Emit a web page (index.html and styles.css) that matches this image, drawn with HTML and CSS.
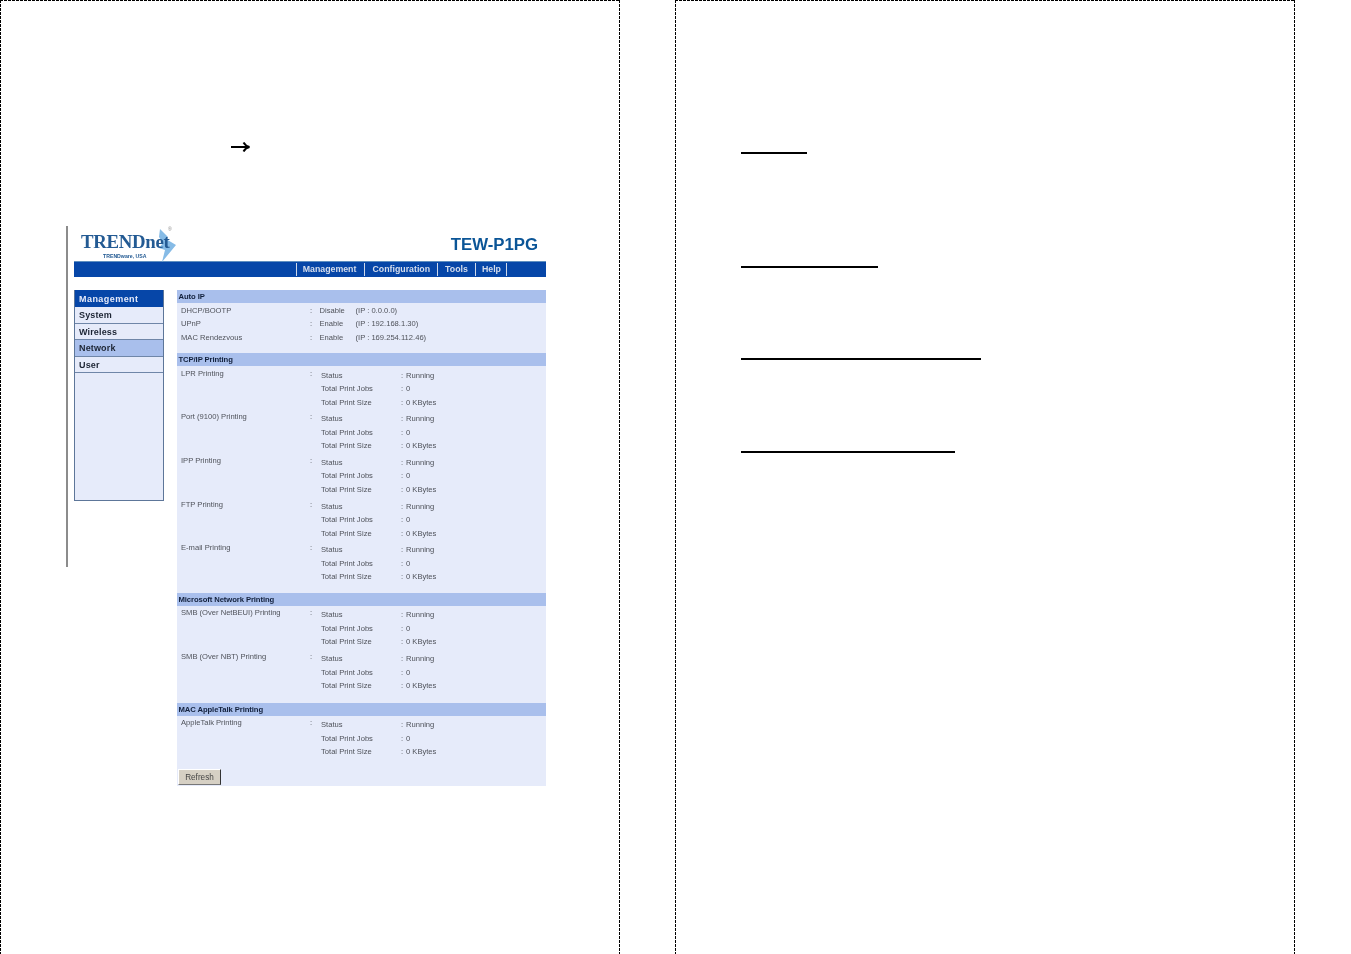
FILE: index.html
```html
<!DOCTYPE html>
<html lang="en">
<head>
<meta charset="utf-8">
<title>TEW-P1PG Network</title>
<link rel="stylesheet" href="styles.css">
</head>
<body>
<div class="spread">
  <section class="page page-left">
    <svg class="arrow" width="20" height="12" viewBox="0 0 20 12" aria-hidden="true"><path d="M0 6H18M12.500 1.500C14 4 16 5.500 18.500 6C16 6.500 14 8 12.500 10.500" fill="none" stroke="#000" stroke-width="2"/></svg>
    <div class="figure">
      <header class="brand">
        <div class="logo">
          <svg class="logo-bolt" width="20" height="33" viewBox="0 0 20 33" aria-hidden="true"><path d="M3 0L11 8L9 10L19 16L5 33L8 21L2 19L6 14L2 8Z" fill="#86bbe6"/></svg>
          <span class="logo-mark">®</span>
          <span class="logo-name">TRENDnet</span>
          <span class="logo-sub">TRENDware, USA</span>
        </div>
        <div class="model">TEW-P1PG</div>
      </header>
      <nav class="topnav">
        <span class="nav-item nav-first">Management</span>
        <span class="nav-item">Configuration</span>
        <span class="nav-item">Tools</span>
        <span class="nav-item nav-last">Help</span>
      </nav>
      <div class="columns">
        <aside class="sidebar">
          <div class="side-title">Management</div>
          <div class="side-item">System</div>
          <div class="side-item">Wireless</div>
          <div class="side-item active">Network</div>
          <div class="side-item">User</div>
        </aside>
        <main class="content">
          <h2 class="bar">Auto IP</h2>
          <div class="section auto">
            <div class="auto-row"><span>DHCP/BOOTP</span><span>:</span><span>Disable</span><span>(IP : 0.0.0.0)</span></div>
            <div class="auto-row"><span>UPnP</span><span>:</span><span>Enable</span><span>(IP : 192.168.1.30)</span></div>
            <div class="auto-row"><span>MAC Rendezvous</span><span>:</span><span>Enable</span><span>(IP : 169.254.112.46)</span></div>
          </div>

          <h2 class="bar">TCP/IP Printing</h2>
          <div class="section tcp">
            <div class="group"><span class="g-name">LPR Printing</span><span class="g-colon">:</span><div class="stats"><span>Status</span><span>:</span><span>Running</span><span>Total Print Jobs</span><span>:</span><span>0</span><span>Total Print Size</span><span>:</span><span>0 KBytes</span></div></div>
            <div class="group"><span class="g-name">Port (9100) Printing</span><span class="g-colon">:</span><div class="stats"><span>Status</span><span>:</span><span>Running</span><span>Total Print Jobs</span><span>:</span><span>0</span><span>Total Print Size</span><span>:</span><span>0 KBytes</span></div></div>
            <div class="group"><span class="g-name">IPP Printing</span><span class="g-colon">:</span><div class="stats"><span>Status</span><span>:</span><span>Running</span><span>Total Print Jobs</span><span>:</span><span>0</span><span>Total Print Size</span><span>:</span><span>0 KBytes</span></div></div>
            <div class="group"><span class="g-name">FTP Printing</span><span class="g-colon">:</span><div class="stats"><span>Status</span><span>:</span><span>Running</span><span>Total Print Jobs</span><span>:</span><span>0</span><span>Total Print Size</span><span>:</span><span>0 KBytes</span></div></div>
            <div class="group"><span class="g-name">E-mail Printing</span><span class="g-colon">:</span><div class="stats"><span>Status</span><span>:</span><span>Running</span><span>Total Print Jobs</span><span>:</span><span>0</span><span>Total Print Size</span><span>:</span><span>0 KBytes</span></div></div>
          </div>

          <h2 class="bar">Microsoft Network Printing</h2>
          <div class="section ms">
            <div class="group"><span class="g-name">SMB (Over NetBEUI) Printing</span><span class="g-colon">:</span><div class="stats"><span>Status</span><span>:</span><span>Running</span><span>Total Print Jobs</span><span>:</span><span>0</span><span>Total Print Size</span><span>:</span><span>0 KBytes</span></div></div>
            <div class="group"><span class="g-name">SMB (Over NBT) Printing</span><span class="g-colon">:</span><div class="stats"><span>Status</span><span>:</span><span>Running</span><span>Total Print Jobs</span><span>:</span><span>0</span><span>Total Print Size</span><span>:</span><span>0 KBytes</span></div></div>
          </div>

          <h2 class="bar">MAC AppleTalk Printing</h2>
          <div class="section mac">
            <div class="group"><span class="g-name">AppleTalk Printing</span><span class="g-colon">:</span><div class="stats"><span>Status</span><span>:</span><span>Running</span><span>Total Print Jobs</span><span>:</span><span>0</span><span>Total Print Size</span><span>:</span><span>0 KBytes</span></div></div>
            <button class="refresh" type="button">Refresh</button>
          </div>
        </main>
      </div>
    </div>
  </section>
  <section class="page page-right">
    <div class="rule rule-1"></div>
    <div class="rule rule-2"></div>
    <div class="rule rule-3"></div>
    <div class="rule rule-4"></div>
  </section>
</div>
</body>
</html>
```
FILE: styles.css
```css
* { box-sizing: border-box; }
html, body { margin: 0; padding: 0; background: #fff; }
body { width: 1351px; height: 954px; overflow: hidden; font-family: "Liberation Sans", Arial, sans-serif; }

.spread { display: flex; gap: 55px; height: 954px; }
.page {
  width: 620px;
  height: 954px;
  flex: none;
  background-color: #fff;
  background-image:
    repeating-linear-gradient(90deg, #000 0 3px, transparent 3px 4px),
    repeating-linear-gradient(180deg, #000 0 3px, transparent 3px 4px),
    repeating-linear-gradient(180deg, #000 0 3px, transparent 3px 4px);
  background-size: 100% 1px, 1px 100%, 1px 100%;
  background-position: 0 0, 0 0, 100% 0;
  background-repeat: no-repeat;
}
.page-left { padding: 141px 0 0 66px; }
.arrow { display: block; margin-left: 165px; height: 12px; }

.figure { position: relative; width: 480px; margin-top: 73px; padding-left: 8px; filter: blur(0.3px); }
.figure::before { content: ""; position: absolute; left: 0; top: 0; width: 2px; height: 341px; background: #8c8c8c; }

.brand { height: 35px; display: flex; justify-content: space-between; }
.logo { position: relative; width: 105px; padding: 6px 0 0 7px; }
.logo-name { position: relative; display: block; font: bold 18.800px/20px "Liberation Serif", serif; color: #235a93; letter-spacing: -0.300px; }
.logo-sub { position: relative; display: block; margin-left: 22px; font: bold 5.200px/7px "Liberation Sans", sans-serif; color: #235a93; margin-top: 1px; }
.logo-bolt { position: absolute; left: 83px; top: 3px; }
.logo-mark { position: absolute; left: 94px; top: 0; font-size: 5px; line-height: 6px; color: #888; }
.model { font: bold 16.800px/20px "Liberation Sans", sans-serif; color: #0b5597; margin: 9px 8px 0 0; }

.topnav {
  height: 16px;
  background: #0646a8;
  border-top: 1px solid #5f8fc0;
  display: flex;
  justify-content: flex-end;
  align-items: center;
  padding-right: 39px;
}
.nav-item {
  font-size: 8.800px;
  font-weight: bold;
  color: #d5ddec;
  line-height: 13px;
  padding: 0 7px;
  border-left: 1px solid #cfd9ea;
}
.nav-first { padding: 0 8px 0 6px; }
.nav-last { border-right: 1px solid #cfd9ea; padding: 0 5px 0 6px; }

.columns { display: flex; gap: 13px; margin-top: 13px; align-items: flex-start; }

.sidebar {
  width: 90px;
  height: 211px;
  background: #e6ebfa;
  border: 1px solid #5d7699;
  border-top: 0;
}
.side-title {
  height: 17px;
  line-height: 18px;
  background: #0646a8;
  color: #e6ebfa;
  font-size: 9px;
  font-weight: bold;
  letter-spacing: 0.450px;
  padding-left: 4px;
}
.side-item {
  height: 16.500px;
  line-height: 16px;
  font-size: 9px;
  font-weight: bold;
  letter-spacing: 0.150px;
  color: #1c2433;
  padding-left: 4px;
  border-bottom: 1px solid #6f86a8;
}
.side-item.active { background: #a9bfec; }

.content { width: 369px; height: 496px; background: #e6ebfa; color: #4f525a; font-size: 7.600px; line-height: 13.500px; }
.bar {
  margin: 0;
  height: 13px;
  line-height: 14px;
  background: #a9bfec;
  color: #12203c;
  font-size: 7.700px;
  font-weight: bold;
  letter-spacing: -0.100px;
  padding-left: 1.500px;
}
.section { padding-left: 4px; }
.section.auto { padding-top: 0.500px; padding-bottom: 9px; }
.section.tcp { padding-top: 2.500px; padding-bottom: 6px; }
.section.ms { padding-top: 2.500px; padding-bottom: 7.100px; }
.section.mac { padding-top: 2.500px; }

.auto-row { display: grid; grid-template-columns: 129px 9.500px 36px auto; height: 13.500px; }

.group { display: grid; grid-template-columns: 129px 11px 1fr; height: 43.700px; }
.g-name { margin-top: -2px; }
.g-colon { margin-top: -2px; }
.stats { display: grid; grid-template-columns: 80px 5px 1fr; grid-auto-rows: 13.500px; align-content: start; }

.refresh {
  display: block;
  margin: 7px 0 0 -3px;
  width: 43px;
  height: 16px;
  padding: 0;
  background: #d6d0c4;
  border: 0;
  border-right: 1px solid #333;
  border-bottom: 1px solid #777;
  border-top: 1px solid #fff;
  border-left: 1px solid #fff;
  font: 8.200px/13px "Liberation Sans", sans-serif;
  color: #444;
}

.page-right { padding: 152px 0 0 66px; }
.rule { height: 2px; background: #000; }
.rule-1 { width: 66px; }
.rule-2 { width: 137px; margin-top: 112px; }
.rule-3 { width: 240px; margin-top: 90px; }
.rule-4 { width: 214px; margin-top: 91px; }
```
